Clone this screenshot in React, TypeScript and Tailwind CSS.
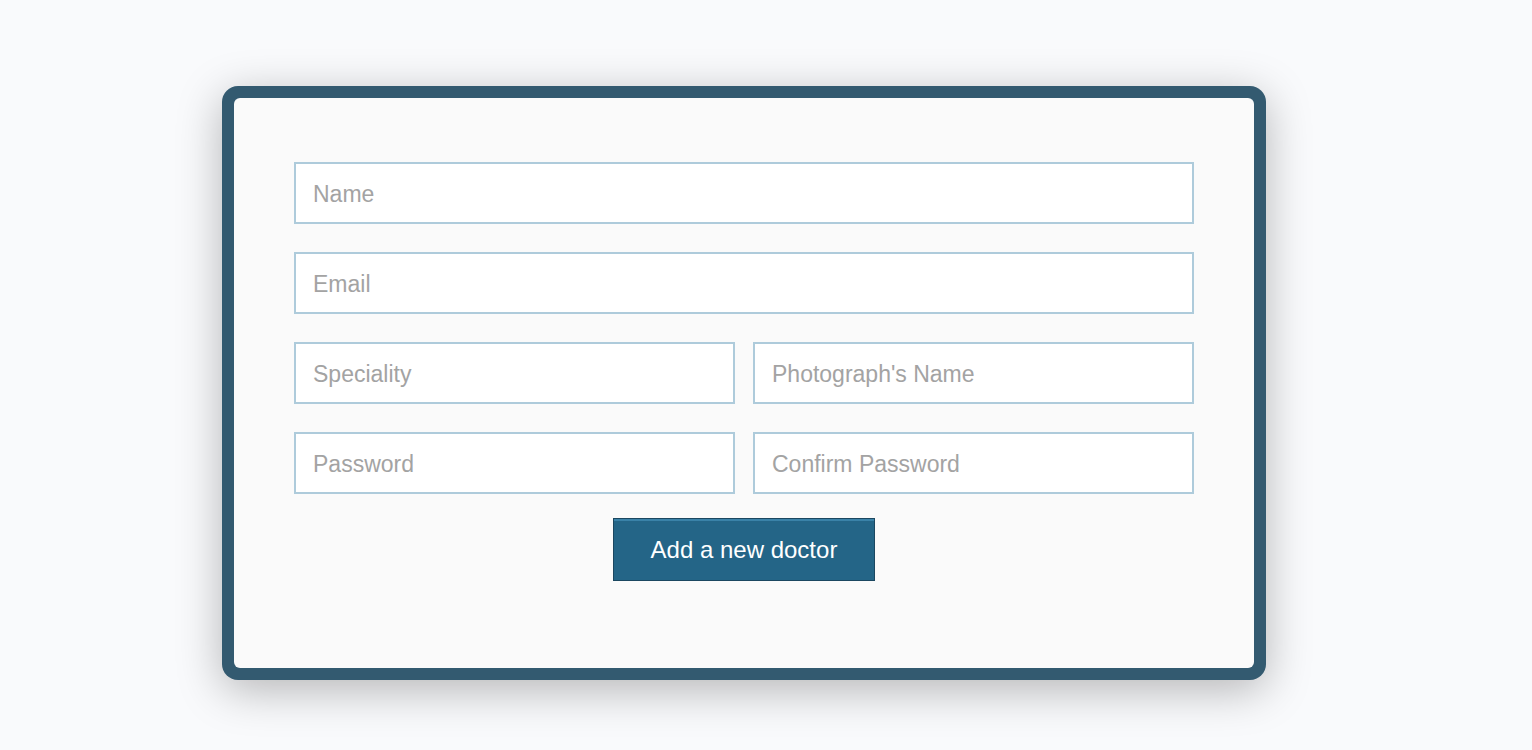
import React from "react";

function Field({ placeholder, type = "text" }: { placeholder: string; type?: string }) {
    return (
        <input
            type={type}
            placeholder={placeholder}
            className="w-full h-[62px] bg-white border-2 border-[#aecbdb] pl-[17px] pr-4 pt-[2px] text-[23px] text-[#555] placeholder:text-[#a3a3a3] outline-none font-['Liberation_Sans',Arial,sans-serif]"
        />
    );
}

export default function App() {
    return (
        <div className="min-h-[750px] w-full bg-[#f9fafc] pt-[86px] pl-[222px] font-['Liberation_Sans',Arial,sans-serif]">
            {/* Card with thick dark frame */}
            <div className="w-[1044px] h-[594px] rounded-[16px] bg-[#335a70] p-[12px] shadow-[0_10px_45px_rgba(0,0,0,0.28)]">
                <div className="h-full rounded-[6px] bg-[#fafafa] px-[60px] pt-[64px]">
                    <form className="flex flex-col gap-[28px]" onSubmit={(e) => e.preventDefault()}>
                        <Field placeholder="Name" />
                        <Field placeholder="Email" type="email" />
                        <div className="grid grid-cols-2 gap-[18px]">
                            <Field placeholder="Speciality" />
                            <Field placeholder="Photograph's Name" />
                        </div>
                        <div className="grid grid-cols-2 gap-[18px]">
                            <Field placeholder="Password" type="password" />
                            <Field placeholder="Confirm Password" type="password" />
                        </div>
                        <div className="flex justify-center -mt-[4px]">
                            <button
                                type="submit"
                                className="w-[262px] h-[63px] bg-[#246587] border border-[#1b4760] shadow-[inset_0_2px_0_#3a82a8] text-white text-[24px]"
                            >
                                Add a new doctor
                            </button>
                        </div>
                    </form>
                </div>
            </div>
        </div>
    );
}
